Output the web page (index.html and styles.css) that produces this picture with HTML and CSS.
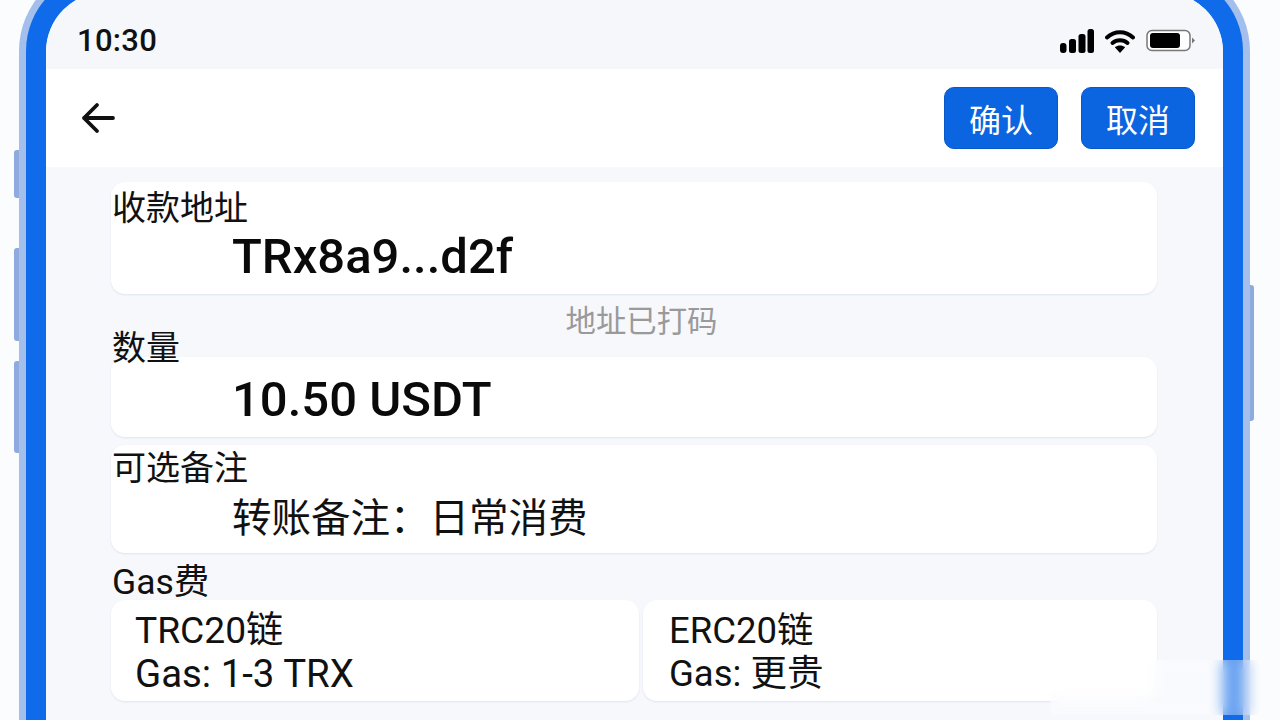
FILE: index.html
```html
<!DOCTYPE html>
<html lang="zh-CN">
<head>
    <meta charset="UTF-8">
    <title>转账确认</title>
    <link rel="stylesheet" href="styles.css">
</head>
<body>
    <div class="phone">
        <span class="side-btn side-btn-a"></span>
        <span class="side-btn side-btn-b"></span>
        <span class="side-btn side-btn-c"></span>
        <span class="side-btn side-btn-power"></span>
        <div class="frame">
            <div class="screen">
                <div class="status-bar">
                    <span class="time">10:30</span>
                    <div class="status-icons">
                        <svg width="34" height="24" viewBox="0 0 34 24">
                            <rect x="0" y="14" width="6.5" height="10" rx="3" fill="#000"/>
                            <rect x="9" y="10" width="7" height="14" rx="2.5" fill="#000"/>
                            <rect x="18.500" y="5" width="7" height="19" rx="2.5" fill="#000"/>
                            <rect x="27.500" y="0" width="6.500" height="24" rx="2.500" fill="#000"/>
                        </svg>
                        <svg width="30" height="24" viewBox="0 0 30 24">
                            <path d="M2 8.500C9.500 1.500 20.500 1.500 28 8.500" fill="none" stroke="#000" stroke-width="4" stroke-linecap="round"/>
                            <path d="M7.500 14C11.800 10.300 18.200 10.300 22.500 14" fill="none" stroke="#000" stroke-width="4" stroke-linecap="round"/>
                            <path d="M15 24L9.800 18.300C12.800 15.800 17.200 15.800 20.200 18.300Z" fill="#000"/>
                        </svg>
                        <svg width="50" height="24" viewBox="0 0 50 24">
                            <rect x="1" y="1.500" width="43" height="20" rx="5" fill="#fff" stroke="#777" stroke-width="1.500"/>
                            <rect x="4" y="4" width="30" height="15" rx="3" fill="#000"/>
                            <path d="M46 8.500L49 11.500L46 14.500Z" fill="#777"/>
                        </svg>
                    </div>
                </div>
                <div class="top-bar">
                    <svg class="back" width="36" height="32" viewBox="0 0 36 32">
                        <path d="M17 3L4 16L17 29M4 16H33" fill="none" stroke="#111" stroke-width="3.800" stroke-linecap="round" stroke-linejoin="round"/>
                    </svg>
                    <div class="actions">
                        <button class="btn">确认</button>
                        <button class="btn">取消</button>
                    </div>
                </div>
                <div class="content">
                    <div class="field-label label-address">收款地址</div>
                    <div class="card card-address"><div class="value">TRx8a9...d2f</div></div>
                    <div class="hint">地址已打码</div>
                    <div class="field-label label-amount">数量</div>
                    <div class="card card-amount"><div class="value">10.50 USDT</div></div>
                    <div class="field-label label-memo">可选备注</div>
                    <div class="card card-memo"><div class="memo">转账备注：日常消费</div></div>
                    <div class="field-label label-gas">Gas费</div>
                    <div class="gas-row">
                        <div class="card gas-card">
                            <div class="gas-chain">TRC20链</div>
                            <div class="gas-price">Gas: 1-3 TRX</div>
                        </div>
                        <div class="card gas-card gas-card-narrow">
                            <div>ERC20链</div>
                            <div>Gas: 更贵</div>
                        </div>
                    </div>
                </div>
            </div>
        </div>
    </div>
    <div class="blur-patch"></div>
</body>
</html>
```

FILE: styles.css
```css
html, body { margin: 0; height: 720px; overflow: hidden; }
body { background-color: #fbfcfe; font-family: Roboto, "Noto Sans CJK SC", sans-serif; color: #111; position: relative; }

.phone { position: relative; margin: -35px 30px 0 19px; padding: 7px 7px 0; height: 748px; background-color: #a4bfec; border-radius: 86px 86px 0 0; }
.frame { padding: 20px 20px 0 20px; height: 728px; background-color: #0f6bea; border-radius: 79px 79px 0 0; }
.screen { height: 728px; background-color: #f6f8fc; border-radius: 60px 60px 0 0; overflow: hidden; }

.side-btn { position: absolute; width: 5px; background-color: #8eaade; border-radius: 3px 0 0 3px; left: -5px; }
.side-btn-a { top: 185px; height: 48px; }
.side-btn-b { top: 283px; height: 93px; }
.side-btn-c { top: 396px; height: 92px; }
.side-btn-power { left: auto; right: -4px; width: 4px; top: 320px; height: 136px; border-radius: 0 3px 3px 0; }

.status-bar { height: 77px; padding: 20px 27px 0 32px; box-sizing: border-box; display: flex; justify-content: space-between; align-items: center; background-color: #f5f7fb; }
.time { font-size: 31px; font-weight: 500; letter-spacing: 0.3px; margin-left: -1px; }
.status-icons { display: flex; align-items: center; gap: 11px; }

.top-bar { height: 98px; background-color: #fff; display: flex; justify-content: space-between; align-items: center; padding: 0 27px 0 34px; }
.actions { display: flex; gap: 23px; margin: -1px 1px 0 0; }
.btn { width: 114px; height: 62px; border: 1px solid #0a58c8; border-radius: 10px; background-color: #0b64e0; color: #fff; font-family: inherit; font-size: 32px; padding: 0; }

.content { padding: 15px 66px 0 65px; }
.field-label { font-size: 34px; line-height: 40px; height: 40px; position: relative; z-index: 1; padding-left: 1px; }
.label-address { margin-top: 6px; }
.label-amount { margin-top: -10px; }
.label-memo { margin-top: 11px; }
.label-gas { margin-top: 9px; font-size: 35.500px; }

.card { background-color: #fff; border-radius: 14px; box-shadow: 0 1px 2px rgba(60, 80, 130, 0.12); }
.card-address { margin-top: -46px; padding: 47px 0 9px 121px; }
.card-amount { margin-top: -11px; padding: 15px 0 9px 121px; }
.card-memo { margin-top: -43px; padding: 49px 0 9px 121px; }
.value { font-size: 49px; font-weight: 500; line-height: 56px; color: #0a0a0a; }
.memo { font-size: 39.500px; line-height: 50px; }

.hint { text-align: center; font-size: 30.400px; line-height: 32px; color: #9a9a9a; margin-top: 12px; padding-left: 15px; }

.gas-row { display: grid; grid-template-columns: 528px 514px; gap: 4px; margin-top: -2px; }
.gas-card { padding: 9px 0 6px 24px; font-size: 36.500px; line-height: 43px; }
.gas-card-narrow { padding-left: 26px; }
.gas-chain { font-size: 37.200px; }
.gas-price { font-size: 38.400px; }

.blur-patch { position: absolute; left: 1050px; top: 660px; width: 210px; height: 55px; background-color: rgba(255, 255, 255, 0.35); backdrop-filter: blur(7px); }
```
